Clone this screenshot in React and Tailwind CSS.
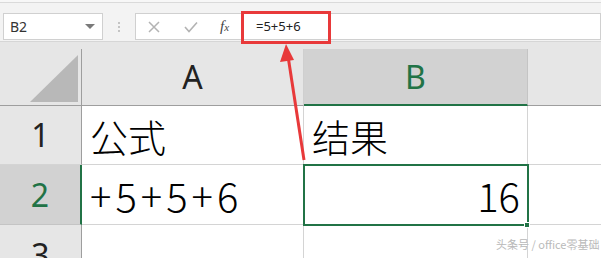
import React from 'react';

const cjk = { fontFamily: '"Noto Sans CJK JP", "Noto Sans CJK SC", sans-serif' };
const ui = { fontFamily: '"Noto Sans", "Noto Sans CJK SC", sans-serif' };

const App = () => {
  return (
    <div className="relative w-[601px] h-[258px] overflow-hidden bg-white" style={ui}>
      {/* Formula bar */}
      <div className="h-[3px] bg-[#f7f7f7] border-b border-[#dadada]" />
      <div className="h-[39px] bg-[#f3f3f3] flex items-start pt-[10px] border-b border-[#d6d6d6]">
        <div className="ml-[3px] w-[100px] h-[27px] bg-white border border-[#d0d0d0] flex items-center justify-between pl-[6px] pr-[7px]">
          <span className="text-[14px] text-[#333]">B2</span>
          <span className="w-0 h-0 border-l-[5px] border-r-[5px] border-t-[5px] border-l-transparent border-r-transparent border-t-[#7a7a7a]" />
        </div>
        <div className="w-[32px] h-[27px] flex flex-col items-center justify-center gap-[2px]">
          <span className="w-[2px] h-[2px] bg-[#c4c4c4]" />
          <span className="w-[2px] h-[2px] bg-[#c4c4c4]" />
          <span className="w-[2px] h-[2px] bg-[#c4c4c4]" />
        </div>
        <div className="w-[106px] h-[27px] bg-white border border-[#d0d0d0] border-r-0 flex items-center">
          <svg className="ml-[12px]" width="12" height="12" viewBox="0 0 12 12">
            <path d="M1 1 L11 11 M11 1 L1 11" stroke="#b3b3b3" strokeWidth="1.5" fill="none" />
          </svg>
          <svg className="ml-[24px]" width="14" height="12" viewBox="0 0 14 12">
            <path d="M1 6 L5 10.5 L13 1.5" stroke="#b3b3b3" strokeWidth="1.6" fill="none" />
          </svg>
          <span className="ml-[22px] text-[15px] italic text-[#444]" style={{ fontFamily: '"Liberation Serif", serif' }}>f<span className="text-[11px]">x</span></span>
        </div>
        <div className="flex-1 h-[27px] bg-white border border-[#d0d0d0] flex items-center pl-[14px]">
          <span className="text-[13px] text-[#222]">=5+5+6</span>
        </div>
      </div>

      {/* Grid */}
      <div className="bg-[#e6e6e6] h-[7px]" />
      <div className="grid grid-cols-[82px_222px_224px_1fr] grid-rows-[57px_59px_60px_59px]">
        {/* header row */}
        <div className="bg-[#e6e6e6] border-r border-b border-[#9e9e9e] flex items-end justify-end pr-[3px] pb-[3px]">
          <span className="w-0 h-0 border-l-[48px] border-b-[47px] border-l-transparent border-b-[#b8b8b8]" />
        </div>
        <div className="bg-[#e6e6e6] border-r border-b border-[#9e9e9e] border-r-[#cfcfcf] flex items-center justify-center text-[32px] text-[#222]">A</div>
        <div className="bg-[#d2d2d2] border-r border-[#c4c4c4] border-b-2 border-b-[#217346] flex items-center justify-center text-[32px] text-[#217346]">B</div>
        <div className="bg-[#e6e6e6] border-b border-[#9e9e9e]" />

        {/* row 1 */}
        <div className="bg-[#e6e6e6] border-r border-[#9e9e9e] border-b border-b-[#d4d4d4] flex items-center justify-center text-[32px] text-[#222]">1</div>
        <div className="border-r border-b border-[#d4d4d4] flex items-center pl-[8px] text-[38px] font-light text-black" style={cjk}>公式</div>
        <div className="border-r border-b border-[#d4d4d4] flex items-center pl-[8px] text-[38px] font-light text-black" style={cjk}>结果</div>
        <div className="border-b border-[#d4d4d4]" />

        {/* row 2 */}
        <div className="bg-[#d2d2d2] border-r-2 border-[#217346] border-b border-b-[#c4c4c4] flex items-center justify-center text-[32px] text-[#217346]">2</div>
        <div className="border-r border-b border-[#d4d4d4] flex items-center pl-[8px] text-[40px] font-light tracking-[4px] text-black" style={cjk}>+5+5+6</div>
        <div className="border-r border-b border-[#d4d4d4] flex items-center justify-end pr-[7px] text-[40px] font-light text-black" style={cjk}>16</div>
        <div className="border-b border-[#d4d4d4]" />

        {/* row 3 */}
        <div className="bg-[#e6e6e6] border-r border-[#9e9e9e] flex items-center justify-center text-[32px] text-[#222]">3</div>
        <div className="border-r border-[#d4d4d4]" />
        <div className="border-r border-[#d4d4d4]" />
        <div />
      </div>

      {/* selection outline on B2 */}
      <div className="absolute left-[303px] top-[164px] w-[226px] h-[62px] border-2 border-[#217346]" />
      <div className="absolute left-[524px] top-[222px] w-[6px] h-[6px] bg-[#217346] border border-white" />

      {/* red annotation box */}
      <div className="absolute left-[241px] top-[11px] w-[90px] h-[33px] border-[3px] border-[#e8393a]" />

      {/* red arrow */}
      <svg className="absolute left-0 top-0 pointer-events-none" width="601" height="258">
        <line x1="304" y1="160" x2="288" y2="56" stroke="#e8393a" strokeWidth="3" />
        <polygon points="286,44 280,62 294,60" fill="#e8393a" />
      </svg>

      {/* watermark */}
      <div className="absolute left-[496px] top-[236px] whitespace-nowrap text-[11px] text-[#b9b9b9]" style={cjk}>头条号 / office零基础</div>
    </div>
  );
};

export default App;
